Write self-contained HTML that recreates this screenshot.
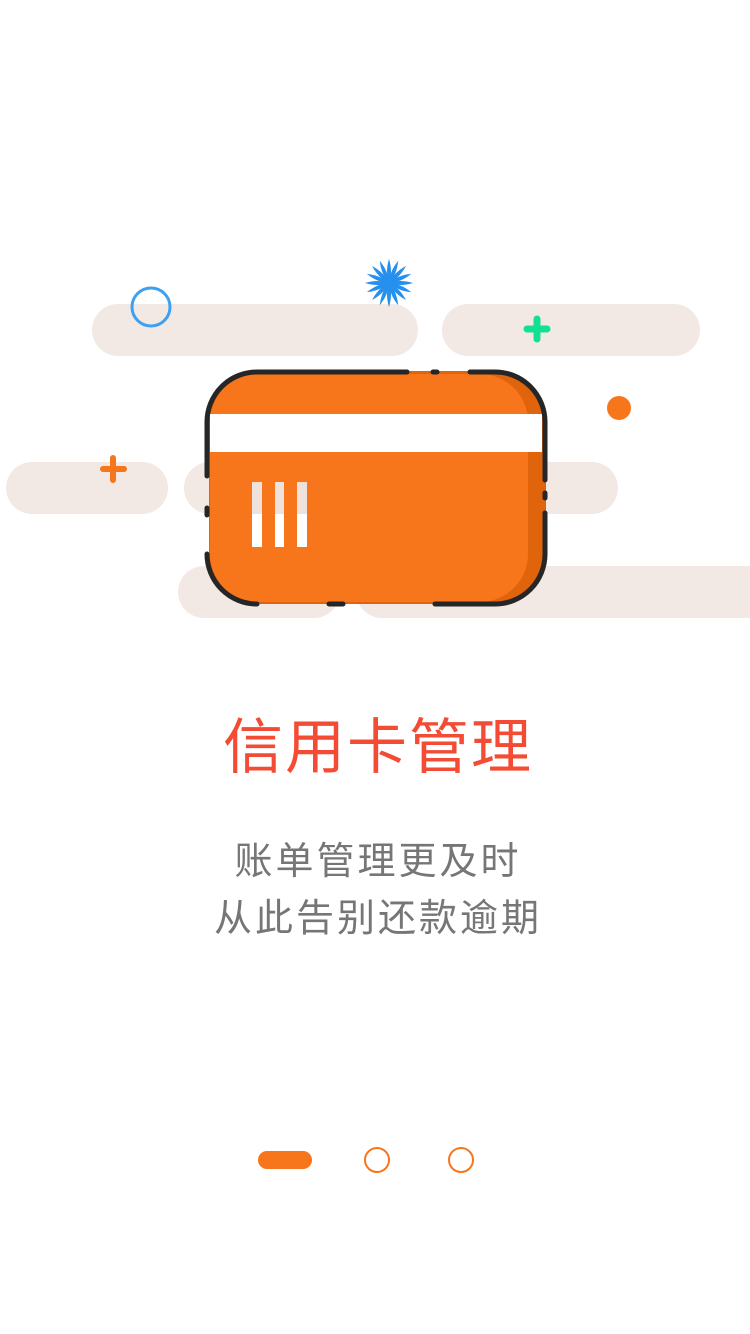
<!DOCTYPE html>
<html><head><meta charset="utf-8"><style>
html,body{margin:0;padding:0;background:#fff;width:750px;height:1334px;overflow:hidden;position:relative}
.t{position:absolute;left:3px;width:750px;text-align:center;font-family:"Liberation Sans","Noto Sans CJK SC",sans-serif}
</style></head><body>
<svg width="750" height="1334" style="position:absolute;left:0;top:0">
<defs><path id="p" d="M0 -24 Q4 -11 0 0 Q-4 -11 0 -24Z M0 24 Q4 11 0 0 Q-4 11 0 24Z"/></defs>
<g fill="#f2e9e4">
<rect x="92" y="304" width="326" height="52" rx="26"/>
<rect x="442" y="304" width="258" height="52" rx="26"/>
<rect x="6" y="462" width="162" height="52" rx="26"/>
<rect x="184" y="462" width="60" height="52" rx="26"/>
<rect x="520" y="462" width="98" height="52" rx="26"/>
<rect x="178" y="566" width="162" height="52" rx="26"/>
<rect x="356" y="566" width="420" height="52" rx="26"/>
</g>
<circle cx="151" cy="307" r="19" fill="none" stroke="#3ea0f2" stroke-width="3"/>
<g transform="translate(389,283)" fill="#2590ee">
<use href="#p"/><use href="#p" transform="rotate(22.5)"/><use href="#p" transform="rotate(45)"/><use href="#p" transform="rotate(67.5)"/><use href="#p" transform="rotate(90)"/><use href="#p" transform="rotate(112.5)"/><use href="#p" transform="rotate(135)"/><use href="#p" transform="rotate(157.5)"/>
<circle r="5"/>
</g>
<g stroke="#14e094" stroke-width="7" stroke-linecap="round"><line x1="527" y1="329" x2="547" y2="329"/><line x1="537" y1="319" x2="537" y2="339"/></g>
<g stroke="#f7761b" stroke-width="6" stroke-linecap="round"><line x1="103" y1="469" x2="124" y2="469"/><line x1="113" y1="458" x2="113" y2="480"/></g>
<circle cx="619" cy="408" r="12" fill="#f7761b"/>
<rect x="209" y="371" width="337" height="233" rx="50" fill="#e0640c"/>
<rect x="210" y="374" width="318" height="228" rx="48" fill="#f7761b"/>
<rect x="210" y="414" width="332" height="38" fill="#fff"/>
<g fill="#efe2dc"><rect x="252" y="482" width="10" height="32"/><rect x="275" y="482" width="9" height="32"/><rect x="297" y="482" width="10" height="32"/></g>
<g fill="#fff"><rect x="252" y="514" width="10" height="33"/><rect x="275" y="514" width="9" height="33"/><rect x="297" y="514" width="10" height="33"/></g>
<g fill="none" stroke="#262626" stroke-width="5" stroke-linecap="round">
<path d="M207 476 V422 A50 50 0 0 1 257 372 H407"/>
<path d="M433 372 H437"/>
<path d="M470 372 H495 A50 50 0 0 1 545 422 V480"/>
<path d="M545 493 V498"/>
<path d="M545 513 V554 A50 50 0 0 1 495 604 H435"/>
<path d="M329 604 H343"/>
<path d="M257 604 A50 50 0 0 1 207 554"/>
<path d="M207 508 V515"/>
</g>
<rect x="258" y="1151" width="54" height="18" rx="9" fill="#f7761b"/>
<circle cx="377" cy="1160" r="12" fill="none" stroke="#f7761b" stroke-width="2"/>
<circle cx="461" cy="1160" r="12" fill="none" stroke="#f7761b" stroke-width="2"/>
</svg>
<div class="t" style="top:708px;font-size:60px;line-height:80px;color:#f44b34;letter-spacing:2px">信用卡管理</div>
<div class="t" style="top:834px;font-size:38px;line-height:57px;color:#767676;letter-spacing:3px">账单管理更及时<br>从此告别还款逾期</div>
</body></html>
